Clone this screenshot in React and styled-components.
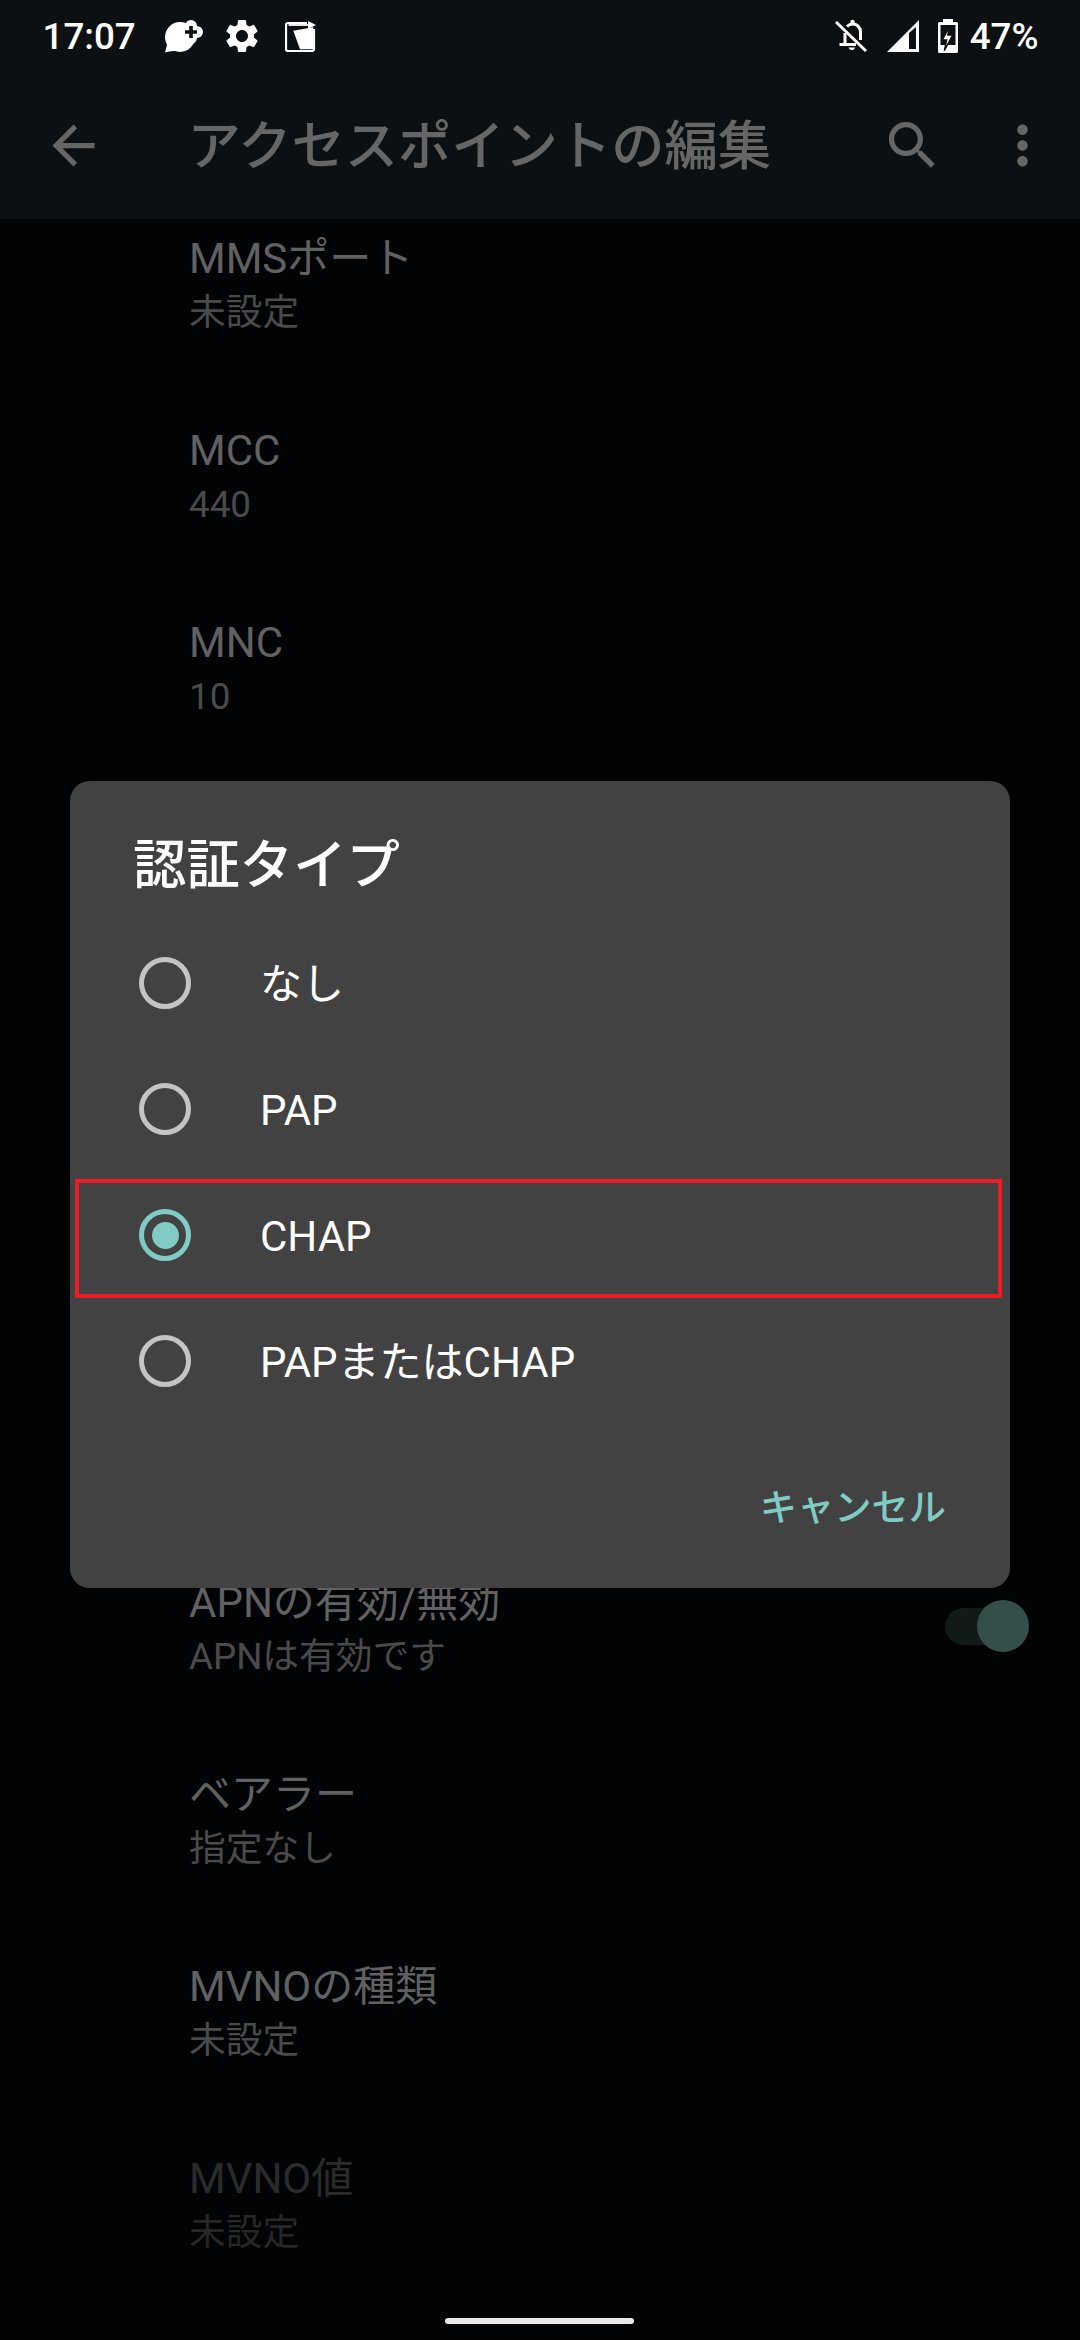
import React from 'react';
import styled, { createGlobalStyle } from 'styled-components';

const GlobalStyle = createGlobalStyle`
    html, body {
        margin: 0;
        padding: 0;
        background: #020305;
    }
    * {
        box-sizing: border-box;
    }
`;

const Screen = styled.div`
    position: relative;
    width: 1080px;
    height: 2340px;
    overflow: hidden;
    background: #020305;
    font-family: Roboto, "Noto Sans CJK JP", sans-serif;
`;

const Header = styled.header`
    position: relative;
    z-index: 1;
    background: #0c1012;
`;

const StatusBar = styled.div`
    height: 72px;
    padding: 0 41.5px 0 42.5px;
    display: flex;
    align-items: center;
    justify-content: space-between;
    color: #ffffff;
`;

const StatusGroup = styled.div`
    display: flex;
    align-items: center;
`;

const StatusText = styled.span`
    padding-top: 2px;
    font-size: 36.75px;
    line-height: 70px;
    font-weight: 500;
    margin-left: ${p => p.$ml || 0}px;
`;

const StatusIcon = styled.svg`
    display: block;
    flex: none;
    margin-left: ${p => p.$ml || 0}px;
    fill: #ffffff;
`;

const Toolbar = styled.div`
    height: 147px;
    padding: 0 26px 0 42px;
    display: flex;
    align-items: center;
    color: #666666;
`;

const ToolbarIcon = styled.svg`
    display: block;
    flex: none;
    width: 63px;
    height: 63px;
    margin-left: ${p => p.$ml || 0}px;
    fill: #666666;
`;

const ToolbarTitle = styled.h1`
    flex: 1;
    margin: 3px 0 0 82.5px;
    font-size: 53.3px;
    line-height: 64px;
    font-weight: 500;
`;

const List = styled.main`
    margin-top: -30.5px;
`;

const Row = styled.div`
    height: 192px;
    padding: 42px 51px 0 189px;
    display: flex;
    justify-content: space-between;
    align-items: flex-start;
`;

const Covered = styled.div`
    height: 768px;
`;

const RowTitle = styled.div`
    font-size: 42px;
    line-height: 56px;
    color: ${p => (p.$disabled ? '#2b2b2b' : '#616161')};
`;

const RowValue = styled.div`
    font-size: 36.75px;
    line-height: 52px;
    color: ${p => (p.$disabled ? '#272727' : '#4a4a4a')};
`;

const SwitchTrack = styled.div`
    position: relative;
    width: 84px;
    height: 37px;
    margin-top: 33px;
    border-radius: 19px;
    background: #0f1a19;
`;

const SwitchThumb = styled.div`
    position: absolute;
    top: -8px;
    right: 0;
    width: 52px;
    height: 52px;
    border-radius: 50%;
    background: #344e4a;
`;

const Dialog = styled.section`
    position: absolute;
    z-index: 2;
    top: 781px;
    left: 70px;
    width: 940px;
    height: 807px;
    border-radius: 20px;
    background: #424242;
    color: #ffffff;
`;

const DialogTitle = styled.h2`
    margin: 0;
    padding: 53px 0 22px 63px;
    font-size: 53.4px;
    line-height: 64px;
    font-weight: 500;
`;

const Option = styled.div`
    position: relative;
    height: 126px;
    padding-left: 69px;
    display: flex;
    align-items: center;
`;

const OptionLabel = styled.span`
    margin-top: 3px;
    font-size: 42px;
    line-height: 56px;
`;

const Radio = styled.span`
    flex: none;
    width: 52px;
    height: 52px;
    margin-right: 69px;
    border: 5px solid ${p => (p.$checked ? '#80cbc4' : '#c4c4c4')};
    border-radius: 50%;
    display: flex;
    align-items: center;
    justify-content: center;

    &::after {
        content: '';
        display: ${p => (p.$checked ? 'block' : 'none')};
        width: 27px;
        height: 27px;
        border-radius: 50%;
        background: #80cbc4;
    }
`;

const Highlight = styled.div`
    position: absolute;
    top: 7px;
    left: 5px;
    right: 8px;
    bottom: 0;
    border: 4.5px solid #ed1c24;
`;

const DialogFooter = styled.div`
    height: 162px;
    padding-right: 64px;
    display: flex;
    align-items: center;
    justify-content: flex-end;
`;

const CancelButton = styled.button`
    padding: 0;
    border: none;
    background: transparent;
    color: #80cbc4;
    font-family: inherit;
    font-size: 37.25px;
    font-weight: 500;
`;

const HomeBar = styled.div`
    position: absolute;
    z-index: 1;
    bottom: 16px;
    left: 445px;
    width: 189px;
    height: 6px;
    border-radius: 3px;
    background: #e8e8e8;
`;

const BubbleIcon = () => (
    <StatusIcon $ml={29} width="40" height="34" viewBox="0 0 40 34">
        <circle cx="15" cy="18" r="15" />
        <path d="M0 33.5 L3 22 L12 32 C8 32 4 32 0 33.5z" />
        <path d="M20 13H32M26 7V19" stroke="#ffffff" strokeWidth="12" strokeLinecap="round" />
        <path d="M20 13H32M26 7V19" stroke="#0c1012" strokeWidth="3.6" />
    </StatusIcon>
);

const GearIcon = () => (
    <StatusIcon $ml={17} width="40" height="40" viewBox="0 0 24 24">
        <path
            fillRule="evenodd"
            d="M19.14,12.94c0.04-0.3,0.06-0.61,0.06-0.94c0-0.32-0.02-0.64-0.07-0.94l2.03-1.58c0.18-0.14,0.23-0.41,0.12-0.61 l-1.92-3.32c-0.12-0.22-0.37-0.29-0.59-0.22l-2.39,0.96c-0.5-0.38-1.03-0.7-1.62-0.94L14.4,2.81c-0.04-0.24-0.24-0.41-0.48-0.41 h-3.84c-0.24,0-0.43,0.17-0.47,0.41L9.25,5.35C8.66,5.59,8.12,5.92,7.63,6.29L5.24,5.33c-0.22-0.08-0.47,0-0.59,0.22L2.74,8.87 C2.62,9.08,2.66,9.34,2.86,9.48l2.03,1.58C4.84,11.36,4.8,11.69,4.8,12s0.02,0.64,0.07,0.94l-2.03,1.58 c-0.18,0.14-0.23,0.41-0.12,0.61l1.92,3.32c0.12,0.22,0.37,0.29,0.59,0.22l2.39-0.96c0.5,0.38,1.03,0.7,1.62,0.94l0.36,2.54 c0.05,0.24,0.24,0.41,0.48,0.41h3.84c0.24,0,0.44-0.17,0.47-0.41l0.36-2.54c0.59-0.24,1.13-0.56,1.62-0.94l2.39,0.96 c0.22,0.08,0.47,0,0.59-0.22l1.92-3.32c0.12-0.22,0.07-0.47-0.12-0.61L19.14,12.94z M12,15.6c-1.98,0-3.6-1.62-3.6-3.6 s1.62-3.6,3.6-3.6s3.6,1.62,3.6,3.6S13.98,15.6,12,15.6z"
        />
    </StatusIcon>
);

const CardIcon = () => (
    <StatusIcon $ml={23} width="31" height="32" viewBox="0 0 31 32">
        <path d="M22 3H3a2 2 0 0 0-2 2V29a2 2 0 0 0 2 2H27a2 2 0 0 0 2-2V9" fill="none" stroke="#ffffff" strokeWidth="2.2" />
        <path d="M3.5 5H24" stroke="#ffffff" strokeWidth="1.8" />
        <path d="M23 1L31 5L23 9z" />
        <path d="M8.3 10.7L28.3 7.3V29.3H15z" />
    </StatusIcon>
);

const BellOffIcon = () => (
    <StatusIcon width="32" height="34" viewBox="0 0 32 34">
        <g fill="none" stroke="#ffffff" strokeWidth="3">
            <path d="M10 24.5V14" />
            <path d="M12 7.5C14 5.5 16 5 17.5 5C23 5 25.5 9.5 25.5 13V21" />
            <path d="M4.5 25.5H21" />
            <path d="M1 3L31 32" />
        </g>
        <circle cx="17.5" cy="3" r="2.2" />
        <path d="M13.5 28.5a3.4 3.4 0 0 0 6.6 0z" />
    </StatusIcon>
);

const SignalIcon = () => (
    <StatusIcon $ml={20} width="32" height="32" viewBox="0 0 32 32">
        <path d="M32 0V32H0z" />
        <path d="M22 13L29 7V29H22z" fill="#0c1012" />
    </StatusIcon>
);

const BatteryIcon = () => (
    <StatusIcon $ml={19} width="20" height="34" viewBox="0 0 20 34">
        <path d="M5 0H15V3H18.5A1.5 1.5 0 0 1 20 4.5V32.5A1.5 1.5 0 0 1 18.5 34H1.5A1.5 1.5 0 0 1 0 32.5V4.5A1.5 1.5 0 0 1 1.5 3H5z" />
        <rect x="2.5" y="6" width="15" height="20" fill="#0c1012" />
        <path d="M12 6.7L4.3 21H8.7L6.3 31.7L14.7 16H9.7z" stroke="#0c1012" strokeWidth="1.4" />
    </StatusIcon>
);

const topRows = [
    { title: 'MMSポート', value: '未設定' },
    { title: 'MCC', value: '440' },
    { title: 'MNC', value: '10' },
];

const bottomRows = [
    { title: 'ベアラー', value: '指定なし' },
    { title: 'MVNOの種類', value: '未設定' },
    { title: 'MVNO値', value: '未設定', disabled: true },
];

const options = ['なし', 'PAP', 'CHAP', 'PAPまたはCHAP'];

const SettingRow = ({ title, value, disabled, children }) => (
    <Row>
        <div>
            <RowTitle $disabled={disabled}>{title}</RowTitle>
            <RowValue $disabled={disabled}>{value}</RowValue>
        </div>
        {children}
    </Row>
);

export default function App() {
    return (
        <Screen>
            <GlobalStyle />
            <Header>
                <StatusBar>
                    <StatusGroup>
                        <StatusText>17:07</StatusText>
                        <BubbleIcon />
                        <GearIcon />
                        <CardIcon />
                    </StatusGroup>
                    <StatusGroup>
                        <BellOffIcon />
                        <SignalIcon />
                        <BatteryIcon />
                        <StatusText $ml={12}>47%</StatusText>
                    </StatusGroup>
                </StatusBar>
                <Toolbar>
                    <ToolbarIcon viewBox="0 0 24 24">
                        <path d="M20 11H7.83l5.59-5.59L12 4l-8 8 8 8 1.41-1.41L7.83 13H20v-2z" />
                    </ToolbarIcon>
                    <ToolbarTitle>アクセスポイントの編集</ToolbarTitle>
                    <ToolbarIcon viewBox="0 0 24 24">
                        <path d="M15.5 14h-.79l-.28-.27C15.41 12.59 16 11.11 16 9.5 16 5.91 13.09 3 9.5 3S3 5.91 3 9.5 5.91 16 9.5 16c1.61 0 3.09-.59 4.23-1.57l.27.28v.79l5 4.99L20.49 19l-4.99-5zm-6 0C7.01 14 5 11.99 5 9.5S7.01 5 9.5 5 14 7.01 14 9.5 11.99 14 9.5 14z" />
                    </ToolbarIcon>
                    <ToolbarIcon $ml={47} viewBox="0 0 24 24">
                        <path d="M12 8c1.1 0 2-.9 2-2s-.9-2-2-2-2 .9-2 2 .9 2 2 2zm0 2c-1.1 0-2 .9-2 2s.9 2 2 2 2-.9 2-2-.9-2-2-2zm0 6c-1.1 0-2 .9-2 2s.9 2 2 2 2-.9 2-2-.9-2-2-2z" />
                    </ToolbarIcon>
                </Toolbar>
            </Header>
            <List>
                {topRows.map(row => <SettingRow key={row.title} {...row} />)}
                <Covered />
                <SettingRow title="APNの有効/無効" value="APNは有効です">
                    <SwitchTrack>
                        <SwitchThumb />
                    </SwitchTrack>
                </SettingRow>
                {bottomRows.map(row => <SettingRow key={row.title} {...row} />)}
            </List>
            <Dialog>
                <DialogTitle>認証タイプ</DialogTitle>
                {options.map(option => (
                    <Option key={option}>
                        <Radio $checked={option === 'CHAP'} />
                        <OptionLabel>{option}</OptionLabel>
                        {option === 'CHAP' && <Highlight />}
                    </Option>
                ))}
                <DialogFooter>
                    <CancelButton>キャンセル</CancelButton>
                </DialogFooter>
            </Dialog>
            <HomeBar />
        </Screen>
    );
}
